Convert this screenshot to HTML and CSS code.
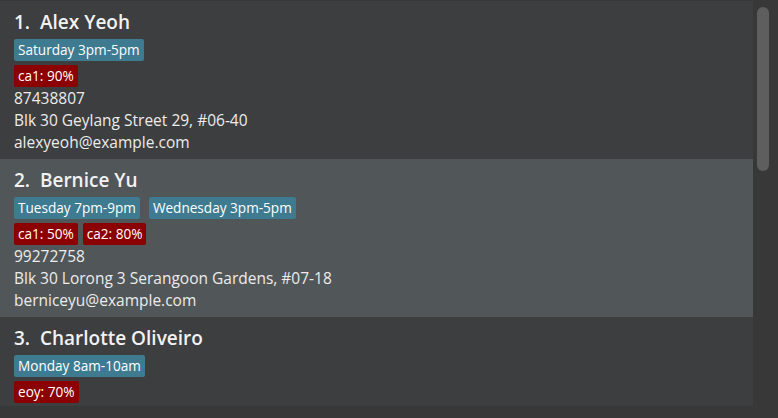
FILE: index.html
```html
<!DOCTYPE html>
<html>
<head>
<meta charset="utf-8">
<link rel="stylesheet" href="styles.css">
</head>
<body>
<div class="panel">
  <div class="list">
    <div class="cell even">
      <div class="name">1.&nbsp;&nbsp;Alex Yeoh</div>
      <div class="tags"><span class="tag">Saturday 3pm-5pm</span></div>
      <div class="grades"><span class="grade">ca1: 90%</span></div>
      <div class="line">87438807</div>
      <div class="line">Blk 30 Geylang Street 29, #06-40</div>
      <div class="line">alexyeoh@example.com</div>
    </div>
    <div class="cell odd">
      <div class="name">2.&nbsp;&nbsp;Bernice Yu</div>
      <div class="tags"><span class="tag">Tuesday 7pm-9pm</span><span class="tag">Wednesday 3pm-5pm</span></div>
      <div class="grades"><span class="grade">ca1: 50%</span><span class="grade">ca2: 80%</span></div>
      <div class="line">99272758</div>
      <div class="line">Blk 30 Lorong 3 Serangoon Gardens, #07-18</div>
      <div class="line">berniceyu@example.com</div>
    </div>
    <div class="cell even">
      <div class="name">3.&nbsp;&nbsp;Charlotte Oliveiro</div>
      <div class="tags"><span class="tag">Monday 8am-10am</span></div>
      <div class="grades"><span class="grade">eoy: 70%</span></div>
    </div>
  </div>
  <div class="scrollbar"><div class="thumb"></div></div>
</div>
</body>
</html>
```

FILE: styles.css
```css
html, body {
  margin: 0;
  padding: 0;
  background: #383838;
}
body {
  font-family: "Open Sans", "Noto Sans", sans-serif;
  color: #ffffff;
}
.panel {
  display: flex;
  height: 418px;
  overflow: hidden;
}
.list {
  width: 753px;
  margin-top: 1px;
  height: 405px;
  overflow: hidden;
  display: flex;
  flex-direction: column;
}
.cell {
  flex: 0 0 158px;
  box-sizing: border-box;
  padding: 9px 14px 0;
  display: flex;
  flex-direction: column;
  align-items: flex-start;
}
.even { background: #3c3e3f; }
.odd { background: #515658; }
.name {
  font-size: 19px;
  font-weight: 600;
  line-height: 25px;
  color: #f2f2f2;
}
.tags, .grades {
  display: flex;
  margin-top: 4px;
}
.tags { gap: 9px; }
.grades { gap: 5px; }
.tag, .grade {
  height: 22px;
  line-height: 22px;
  font-size: 13.6px;
  padding: 0 4px;
  border-radius: 2px;
  color: #ffffff;
}
.tag { background: #3e7b91; }
.grade { background: #8b0000; }
.line {
  font-size: 15.5px;
  line-height: 22px;
  color: #ececec;
}
.scrollbar {
  flex: 1;
  padding: 7px 9px 0 4px;
}
.thumb {
  width: 12px;
  height: 164px;
  border-radius: 6px;
  background: #5e5e5e;
}
```
